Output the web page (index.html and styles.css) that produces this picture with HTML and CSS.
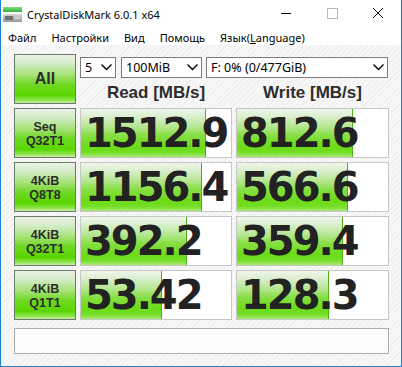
FILE: index.html
```html
<!DOCTYPE html>
<html lang="ru">
<head>
  <meta charset="UTF-8" />
  <title>CrystalDiskMark 6.0.1 x64</title>
  <link rel="stylesheet" href="styles.css">
</head>
<body>
  <div class="window">

    <!-- Title bar -->
    <div class="titlebar">
      <svg class="app-icon" width="20" height="16" viewBox="0 0 20 16">
        <defs>
          <linearGradient id="g1" x1="0" y1="0" x2="0" y2="1">
            <stop offset="0" stop-color="#7fe07f"/>
            <stop offset="1" stop-color="#2fb33f"/>
          </linearGradient>
          <linearGradient id="g2" x1="0" y1="0" x2="0" y2="1">
            <stop offset="0" stop-color="#d8d8d8"/>
            <stop offset="1" stop-color="#9a9a9a"/>
          </linearGradient>
        </defs>
        <rect x="0" y="0" width="19" height="5" fill="url(#g1)"/>
        <rect x="0" y="7" width="19" height="8" fill="url(#g2)"/>
        <rect x="2" y="9" width="8" height="4" fill="#6f6f6f"/>
        <rect x="12" y="10" width="5" height="2" fill="#cfcfcf"/>
      </svg>
      <span class="title">CrystalDiskMark 6.0.1 x64</span>
      <div class="controls">
        <svg width="46" height="30" viewBox="0 0 46 30"><line x1="18" y1="13.5" x2="28" y2="13.5" stroke="#000" stroke-width="1"/></svg>
        <svg width="46" height="30" viewBox="0 0 46 30"><rect x="18.5" y="8.5" width="10" height="10" fill="none" stroke="#b8b8b8" stroke-width="1"/></svg>
        <svg width="46" height="30" viewBox="0 0 46 30"><path d="M18 8 L28 18 M28 8 L18 18" stroke="#000" stroke-width="1"/></svg>
      </div>
    </div>

    <!-- Menu -->
    <div class="menubar">
      <span>Файл</span>
      <span>Настройки</span>
      <span>Вид</span>
      <span>Помощь</span>
      <span>Язык(<u>L</u>anguage)</span>
    </div>

    <!-- Client area -->
    <div class="client">
      <div class="panel">
        <div class="btn all">All</div>

        <div class="top">
          <div class="selects">
            <div class="select s-count">5<svg class="chev" width="11" height="7" viewBox="0 0 11 7"><polyline points="0.5,0.5 5.5,5.5 10.5,0.5" fill="none" stroke="#000" stroke-width="1.4"/></svg></div>
            <div class="select s-size">100MiB<svg class="chev" width="11" height="7" viewBox="0 0 11 7"><polyline points="0.5,0.5 5.5,5.5 10.5,0.5" fill="none" stroke="#000" stroke-width="1.4"/></svg></div>
            <div class="select s-drive">F: 0% (0/477GiB)<svg class="chev" width="11" height="7" viewBox="0 0 11 7"><polyline points="0.5,0.5 5.5,5.5 10.5,0.5" fill="none" stroke="#000" stroke-width="1.4"/></svg></div>
          </div>
          <div class="heads">
            <div class="head">Read [MB/s]</div>
            <div class="head">Write [MB/s]</div>
          </div>
        </div>

        <div class="btn label">Seq<br>Q32T1</div>
        <div class="meter"><div class="bar" style="width:125px"></div><span class="num">1512.9</span></div>
        <div class="meter"><div class="bar" style="width:116px"></div><span class="num">812.6</span></div>

        <div class="btn label">4KiB<br>Q8T8</div>
        <div class="meter"><div class="bar" style="width:121px"></div><span class="num">1156.4</span></div>
        <div class="meter"><div class="bar" style="width:111px"></div><span class="num">566.6</span></div>

        <div class="btn label">4KiB<br>Q32T1</div>
        <div class="meter"><div class="bar" style="width:106px"></div><span class="num">392.2</span></div>
        <div class="meter"><div class="bar" style="width:106px"></div><span class="num">359.4</span></div>

        <div class="btn label">4KiB<br>Q1T1</div>
        <div class="meter"><div class="bar" style="width:81px"></div><span class="num">53.42</span></div>
        <div class="meter"><div class="bar" style="width:92px"></div><span class="num">128.3</span></div>

        <div class="comment"></div>
      </div>
    </div>

  </div>
</body>
</html>
```

FILE: styles.css
```css
html, body {
  margin: 0;
  padding: 0;
}
body {
  width: 402px;
  height: 367px;
  overflow: hidden;
  font-family: "Noto Sans", "Liberation Sans", sans-serif;
}
.window {
  box-sizing: border-box;
  width: 402px;
  height: 367px;
  border: 1px solid #1883d7;
  border-top: none;
  display: flex;
  flex-direction: column;
  background: #fff;
}

/* title bar */
.titlebar {
  height: 30px;
  display: flex;
  align-items: center;
  background: #fff;
}
.app-icon {
  margin-left: 2px;
  margin-top: -1px;
}
.title {
  margin-left: 4px;
  font-size: 11px;
  color: #000;
  margin-top: -2px;
}
.controls {
  margin-left: auto;
  display: flex;
  align-self: flex-start;
}
.controls svg {
  display: block;
}

/* menu */
.menubar {
  height: 15px;
  display: flex;
  font-size: 11px;
  line-height: 15px;
  color: #000;
  padding-left: 7px;
}
.menubar span {
  margin-right: 15px;
}
.menubar u {
  text-decoration: underline;
}

/* client */
.client {
  flex: 1;
  padding: 9px 12px 0 13px;
  background: repeating-linear-gradient(135deg, #f7f7f7 0 3px, #eeeeee 3px 4px);
}
.panel {
  display: grid;
  grid-template-columns: 62px 152px 153px;
  grid-template-rows: 50px 50px 50px 50px 50px 30px;
  column-gap: 4px;
  row-gap: 4px;
}

.btn {
  box-sizing: border-box;
  border: 1px solid #6b7a6b;
  background: linear-gradient(#eaf2e6 0%, #d4ecc6 18%, #a8e27c 40%, #6ed822 62%, #5ad600 84%, #8fe44e 94%, #c9f0a8 100%);
  display: flex;
  align-items: center;
  justify-content: center;
  text-align: center;
  font-family: "Liberation Sans", Arial, sans-serif;
  font-weight: bold;
  color: #2d2d2d;
}
.all {
  font-size: 16px;
}
.label {
  font-size: 12.5px;
  line-height: 14px;
  padding-top: 1px;
}

.top {
  grid-column: 2 / 4;
  padding-top: 3px;
}
.selects {
  display: flex;
}
.select {
  box-sizing: border-box;
  height: 21px;
  border: 1px solid #7a7a7a;
  background: #fff;
  display: flex;
  align-items: center;
  padding-left: 4px;
  padding-right: 3px;
  font-size: 12.5px;
  color: #000;
}
.select .chev {
  margin-left: auto;
}
.s-count {
  width: 36px;
  margin-right: 5px;
}
.s-size {
  width: 81px;
  margin-right: 4px;
}
.s-drive {
  width: 182px;
}
.heads {
  display: grid;
  grid-template-columns: 152px 153px;
  column-gap: 4px;
  margin-top: 5px;
}
.head {
  text-align: center;
  font-family: "Liberation Sans", Arial, sans-serif;
  font-weight: bold;
  font-size: 17px;
  line-height: 19px;
  color: #2d2d2d;
}

.meter {
  position: relative;
  box-sizing: border-box;
  border: 1px solid #c6c6c6;
  background: #fff;
  display: flex;
  align-items: center;
  overflow: hidden;
}
.bar {
  position: absolute;
  left: 0;
  top: 0;
  bottom: 0;
  box-sizing: border-box;
  border-right: 1px solid #4fae16;
  background: linear-gradient(#eef5eb 0%, #dcefd0 15%, #b3e68d 38%, #86df44 55%, #6cdc18 78%, #72de22 90%, #a9ea74 100%);
}
.num {
  position: relative;
  padding-left: 4px;
  font-family: "DejaVu Sans", Verdana, sans-serif;
  font-weight: bold;
  font-size: 40px;
  letter-spacing: -2px;
  line-height: 48px;
  color: #222;
  white-space: nowrap;
}

.comment {
  grid-column: 1 / 4;
  margin-top: 4px;
  box-sizing: border-box;
  border: 1px solid #adadad;
  background: #fbfbfb;
}
```
